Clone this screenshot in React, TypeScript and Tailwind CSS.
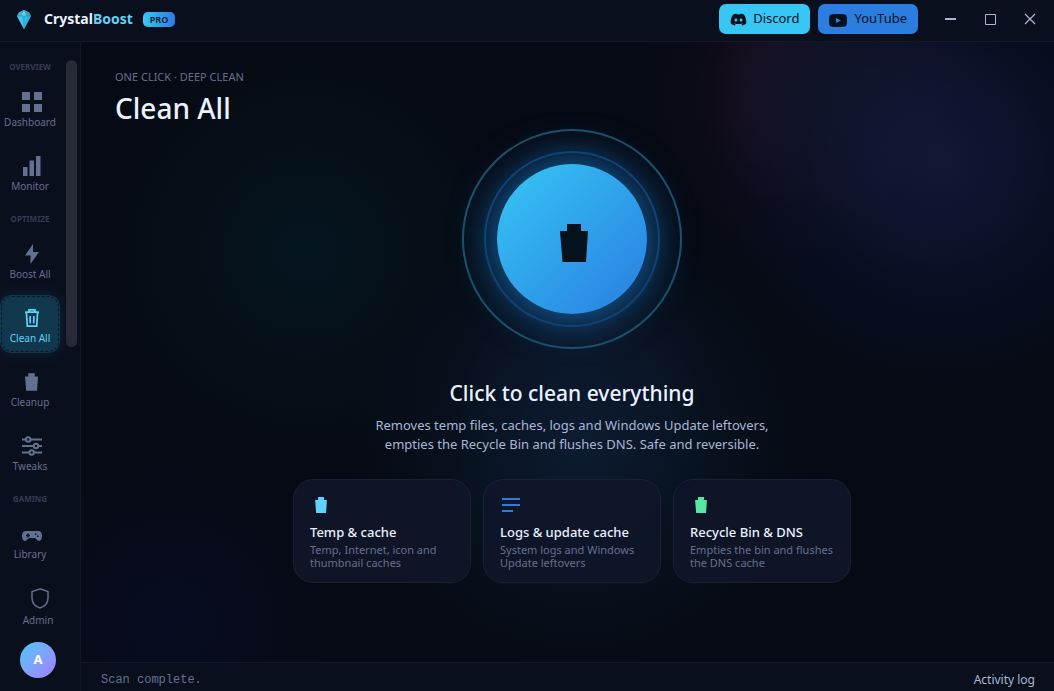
import React, { useState } from 'react';
import { FaDiscord } from 'react-icons/fa';

interface IconProps {
  className?: string;
}

const TrashIcon: React.FC<IconProps> = ({ className }) => (
  <svg className={className} viewBox="0 0 28 38" fill="currentColor" aria-hidden="true">
    <path d="M7 0h14v7h7l-2 31H2.500L0 7h7z" />
  </svg>
);

const TrashOutlineIcon: React.FC<IconProps> = ({ className }) => (
  <svg className={className} viewBox="0 0 14 18" fill="none" stroke="currentColor" strokeWidth={1.7} aria-hidden="true">
    <path d="M0 3.2h14M4 3V.9h6V3M1.4 3.5l.9 13.6h9.4l.9-13.6M5.2 7v7.2M8.8 7v7.2" />
  </svg>
);

const DashboardIcon: React.FC<IconProps> = ({ className }) => (
  <svg className={className} viewBox="0 0 20 20" fill="currentColor" aria-hidden="true">
    <path d="M0 0h8v8H0zM12 0h8v8h-8zM0 12h8v8H0zM12 12h8v8h-8z" />
  </svg>
);

const MonitorIcon: React.FC<IconProps> = ({ className }) => (
  <svg className={className} viewBox="0 0 18 20" fill="currentColor" aria-hidden="true">
    <path d="M0 11h4.500v9H0zM6.500 4.500H11V20H6.500zM13 0h4.500v20H13z" />
  </svg>
);

const BoltIcon: React.FC<IconProps> = ({ className }) => (
  <svg className={className} viewBox="0 0 14 20" fill="currentColor" aria-hidden="true">
    <path d="M8 0 0 11.500h5.500V20L14 8H8z" />
  </svg>
);

const SlidersIcon: React.FC<IconProps> = ({ className }) => (
  <svg className={className} viewBox="0 0 20 20" fill="none" stroke="currentColor" strokeWidth={2} aria-hidden="true">
    <path d="M0 3.500h4M8.500 3.500H20M0 10h12M16 10h4M0 16.500h7.500M12 16.500h8" />
    <circle cx="6.2" cy="3.500" r="2.2" />
    <circle cx="14" cy="10" r="2.2" />
    <circle cx="9.700" cy="16.500" r="2.2" />
  </svg>
);

const GamepadIcon: React.FC<IconProps> = ({ className }) => (
  <svg className={className} viewBox="0 0 20 10" fill="currentColor" fillRule="evenodd" aria-hidden="true">
    <path d="M4 0h12c2.500 0 4 2 4 4.500 0 3-1 5.500-3 5.500-2 0-2.500-2.500-4-3H7c-1.500.5-2 3-4 3S0 7.500 0 4.500C0 2 1.500 0 4 0zM5.200 2.500v1.300H4v1.400h1.200v1.300h1.400V5.200H8V3.800H6.600V2.500zM13 2.500V4h1.500V2.500zM15 4.500V6h1.500V4.500z" />
  </svg>
);

const ShieldIcon: React.FC<IconProps> = ({ className }) => (
  <svg className={className} viewBox="0 0 18 21" fill="none" stroke="currentColor" strokeWidth={1.5} aria-hidden="true">
    <path d="M9 .9 1 3.600v6.400c0 5 3.500 8.500 8 10 4.500-1.500 8-5 8-10V3.600z" />
  </svg>
);

const LinesIcon: React.FC<IconProps> = ({ className }) => (
  <svg className={className} viewBox="0 0 18 16" fill="currentColor" aria-hidden="true">
    <path d="M0 1h18v2H0zM0 7h18v2H0zM0 13h11v2H0z" />
  </svg>
);

const YouTubeIcon: React.FC<IconProps> = ({ className }) => (
  <svg className={className} viewBox="0 0 18 13" fill="currentColor" fillRule="evenodd" aria-hidden="true">
    <path d="M3 .3Q9-.3 15 .3q2.600.2 2.800 2.700.4 3.500 0 7-.2 2.500-2.800 2.700-6 .6-12 0Q.4 12.500.2 10q-.4-3.500 0-7Q.4.500 3 .3zM7 4v5l5-2.500z" />
  </svg>
);

const CrystalLogo: React.FC<IconProps> = ({ className }) => (
  <svg className={className} viewBox="0 0 14 19" aria-hidden="true">
    <path d="M7 0 2 2.500 0 6l7 13 7-13-2-3.500z" fill="#35c3ee" />
    <path d="M7 0 2 2.500 0 6h4.500z" fill="#3fb0cf" />
    <path d="M7 0 4.500 6h5z" fill="#6fcfe6" />
    <path d="m7 0 5 2.500L14 6H9.500z" fill="#3a9fbd" />
    <path d="M4.500 6 7 19 0 6z" fill="#45c9ee" />
    <path d="M9.500 6 7 19l7-13z" fill="#2fb4de" />
    <path d="M0 6h14M7 6v13" stroke="#1c86a8" strokeWidth={0.6} />
  </svg>
);

interface NavEntry {
  label: string;
  Icon: React.FC<IconProps>;
  iconClass: string;
}

const sections: { title: string; items: NavEntry[] }[] = [
  {
    title: 'OVERVIEW',
    items: [
      { label: 'Dashboard', Icon: DashboardIcon, iconClass: 'w-5 h-5' },
      { label: 'Monitor', Icon: MonitorIcon, iconClass: 'w-[18px] h-5' },
    ],
  },
  {
    title: 'OPTIMIZE',
    items: [
      { label: 'Boost All', Icon: BoltIcon, iconClass: 'w-[14px] h-5' },
      { label: 'Clean All', Icon: TrashOutlineIcon, iconClass: 'w-[14px] h-[18px]' },
      { label: 'Cleanup', Icon: TrashIcon, iconClass: 'w-[13px] h-[18px]' },
      { label: 'Tweaks', Icon: SlidersIcon, iconClass: 'w-5 h-5' },
    ],
  },
  {
    title: 'GAMING',
    items: [{ label: 'Library', Icon: GamepadIcon, iconClass: 'w-5 h-[10px] mt-1' }],
  },
];

const cards = [
  {
    title: 'Temp & cache',
    text: 'Temp, Internet, icon and thumbnail caches',
    icon: <TrashIcon className="ml-[5px] w-3 h-4 text-[#5fd3f8]" />,
  },
  {
    title: 'Logs & update cache',
    text: 'System logs and Windows Update leftovers',
    icon: <LinesIcon className="ml-[2px] w-[18px] h-4 text-[#2b7de0]" />,
  },
  {
    title: 'Recycle Bin & DNS',
    text: 'Empties the bin and flushes the DNS cache',
    icon: <TrashIcon className="ml-[5px] w-3 h-4 text-[#57e6a3]" />,
  },
];

const App: React.FC = () => {
  const [active, setActive] = useState('Clean All');

  return (
    <div className="flex flex-col h-screen overflow-hidden bg-[#060a14] text-[#eaf1ff] font-['Noto_Sans',sans-serif]">
      {/* Title bar */}
      <header className="flex items-center shrink-0 h-[42px] pl-[17px] pr-1 pb-[3px] bg-[#0a0f1d] border-b border-[#141a28]">
        <CrystalLogo className="w-[14px] h-[19px]" />
        <div className="ml-[13px] text-[14px] font-bold leading-5">
          Crystal<span className="text-[#5fd3f8]">Boost</span>
        </div>
        <span className="ml-[10px] px-[7px] rounded-[5px] bg-linear-to-r from-[#38c6f4] to-[#2b7de0] text-[9px] leading-[15px] font-semibold text-[#04121d]">
          PRO
        </span>
        <div className="flex items-center gap-2 ml-auto text-[13px] text-[#04121d]">
          <button className="flex items-center gap-[6px] h-[30px] px-[11px] rounded-[7px] bg-[#38c6f4]">
            <FaDiscord className="w-[17px] h-[17px]" />
            Discord
          </button>
          <button className="flex items-center gap-[7px] h-[30px] px-[11px] rounded-[7px] bg-[#2b7de0]">
            <YouTubeIcon className="w-[18px] h-[13px] mt-[3px]" />
            YouTube
          </button>
        </div>
        <div className="flex ml-3 text-[#a9b7d3]">
          <button aria-label="Minimize" className="flex items-center justify-center w-10 h-8">
            <svg className="w-3 h-3" viewBox="0 0 12 12" stroke="currentColor" strokeWidth={2}><path d="M1 6h11" /></svg>
          </button>
          <button aria-label="Maximize" className="flex items-center justify-center w-10 h-8">
            <svg className="w-3 h-3" viewBox="0 0 12 12" fill="none" stroke="currentColor"><path d="M1.5 1.5h10v10h-10z" /></svg>
          </button>
          <button aria-label="Close" className="flex items-center justify-center w-10 h-8">
            <svg className="w-3 h-3" viewBox="0 0 12 12" stroke="currentColor" strokeWidth={1.2}><path d="m1 1 10 10m0-10-10 10" /></svg>
          </button>
        </div>
      </header>

      <div className="flex flex-1 min-h-0">
        {/* Sidebar */}
        <aside className="flex flex-col shrink-0 w-[81px] bg-[#0a0f1d] border-r border-[#111827] text-[#64708f]">
          <div className="flex flex-1 min-h-0">
            <nav className="w-[60px] pt-[13px]">
              {sections.map((section) => (
                <div key={section.title}>
                  <div className="h-6 text-center text-[8px] leading-[23px] font-bold text-[#343d55]">{section.title}</div>
                  {section.items.map(({ label, Icon, iconClass }) => (
                    <button
                      key={label}
                      onClick={() => setActive(label)}
                      className={`flex flex-col items-center w-full h-[58px] mb-[6px] pt-3 rounded-xl text-[10px] leading-[14px] ${
                        active === label
                          ? 'bg-[#12384d] text-[#5fd3f8] outline outline-dashed -outline-offset-2 outline-[#071a28] shadow-[0_0_16px_rgba(56,198,244,0.12)]'
                          : ''
                      }`}
                    >
                      <span className="flex items-center justify-center h-[22px] mb-[2px] pl-[3px]">
                        <Icon className={iconClass} />
                      </span>
                      {label}
                    </button>
                  ))}
                </div>
              ))}
            </nav>
            <div className="w-[11px] h-[287px] ml-[6px] mt-[18px] rounded-full bg-[#272b38]" />
          </div>
          <div className="flex flex-col items-center shrink-0 pr-1 pb-[13px]">
            <button className="flex flex-col items-center mb-[15px] text-[10px] leading-[14px]">
              <ShieldIcon className="w-[18px] h-[21px] ml-[3px] mb-1" />
              Admin
            </button>
            <button className="w-9 h-9 rounded-full bg-linear-to-br from-[#38c6f4] to-[#a07bff] text-[13px] font-bold text-white">
              A
            </button>
          </div>
        </aside>

        <div className="flex flex-col flex-1 min-w-0">
          {/* Page */}
          <main className="flex-1 min-h-0 pl-[34px] pr-[25px] pt-[27px] bg-[radial-gradient(circle_at_860px_120px,#101b3acc_0,#0d1636bb_70px,#08112899_140px,transparent_235px),radial-gradient(circle_at_760px_50px,#1b1a2c_0,#180f20_95px,#0f0b1899_140px,transparent_200px),radial-gradient(circle_at_500px_400px,#0d1b30_0,#0a182acc_80px,#07142099_150px,transparent_230px),radial-gradient(circle_at_500px_320px,#11112c_0,transparent_130px),radial-gradient(circle_at_225px_210px,#051520_0,#050f18_120px,transparent_210px),radial-gradient(circle_at_90px_580px,#070c20_0,transparent_180px)]">
            <div className="text-[11px] leading-4 text-[#64708f]">ONE CLICK · DEEP CLEAN</div>
            <h1 className="pt-[2px] text-[28px] leading-[42px] font-medium">Clean All</h1>

            <div className="flex flex-col items-center">
              <div className="flex items-center justify-center w-[220px] h-[220px] rounded-full border-2 border-[#1b5068]">
                <div className="flex items-center justify-center w-[176px] h-[176px] rounded-full border-2 border-[#0f3058]">
                  <button
                    aria-label="Clean everything"
                    className="flex items-center justify-center w-[150px] h-[150px] pl-1 pt-2 rounded-full bg-linear-to-br from-[#38c6f4] to-[#2b7de0] text-[#04121d] shadow-[0_0_40px_6px_rgba(24,130,215,0.7)]"
                  >
                    <TrashIcon className="w-7 h-[38px]" />
                  </button>
                </div>
              </div>

              <h2 className="mt-[29px] text-[21px] leading-[30px] font-medium">Click to clean everything</h2>
              <p className="mt-2 max-w-[420px] text-center text-[13px] leading-[19px] text-[#a9b7d3]">
                Removes temp files, caches, logs and Windows Update leftovers, empties the Recycle Bin and flushes DNS. Safe and reversible.
              </p>

              <div className="flex gap-3 mt-[25px]">
                {cards.map((card) => (
                  <section key={card.title} className="w-[178px] h-[104px] px-4 pt-[17px] rounded-[20px] border border-[#182236] bg-[#12172a]/80">
                    {card.icon}
                    <h3 className="mt-[10px] text-[13px] leading-[18px] font-medium whitespace-nowrap">{card.title}</h3>
                    <p className="mt-[2px] text-[11px] leading-[13px] text-[#64708f]">{card.text}</p>
                  </section>
                ))}
              </div>
            </div>
          </main>

          {/* Status bar */}
          <footer className="flex items-center justify-between shrink-0 h-[29px] pl-5 pr-[19px] pt-[6px] bg-[#0a0f1d] border-t border-[#141a28]">
            <span className="font-['Liberation_Mono',monospace] text-[12px] text-[#64708f]">Scan complete.</span>
            <button className="text-[12px] text-[#a9b7d3]">Activity log</button>
          </footer>
        </div>
      </div>
    </div>
  );
};

export default App;
